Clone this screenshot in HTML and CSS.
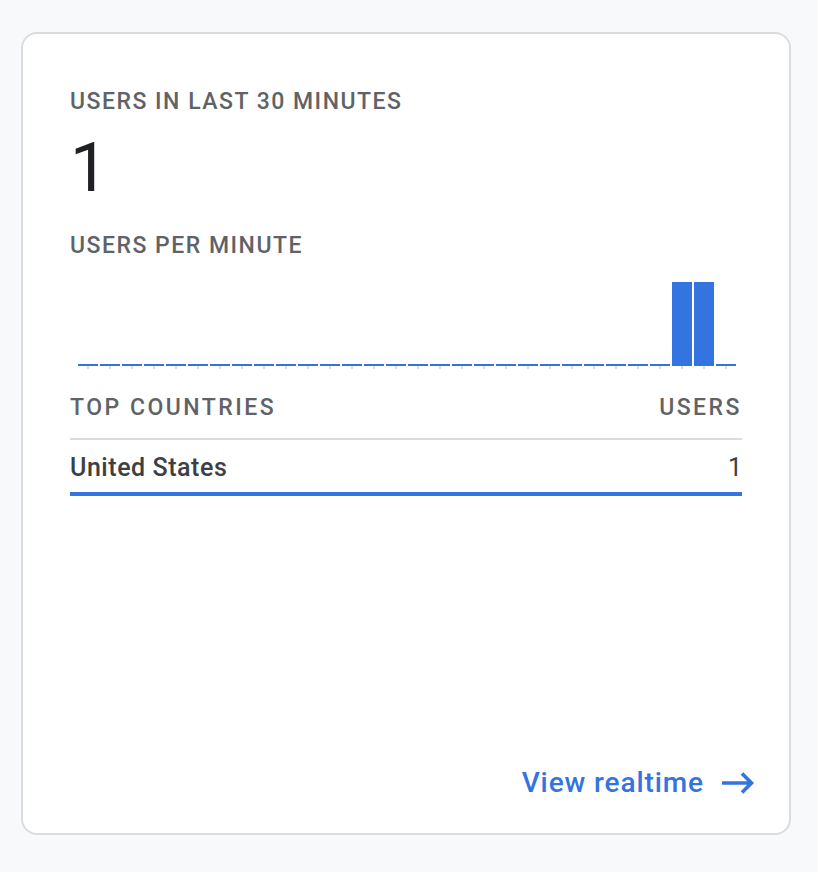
FILE: index.html
```html
<!DOCTYPE html>
<html lang="en">
<head>
    <meta charset="UTF-8">
    <title>Realtime</title>
    <link rel="stylesheet" href="styles.css">
</head>
<body>
    <div class="card">
        <div class="label">Users in last 30 minutes</div>
        <div class="big-number">1</div>
        <div class="label label-chart">Users per minute</div>

        <div class="chart" id="chart"></div>

        <div class="table-head">
            <span class="label label-wide">Top countries</span>
            <span class="label label-wide">Users</span>
        </div>
        <div class="table-row">
            <span class="country">United States</span>
            <span class="value">1</span>
        </div>

        <div class="footer">
            <a class="view-link" href="#">View realtime
                <svg class="arrow" width="34" height="24" viewBox="0 0 34 24">
                    <path d="M1 12H31M21 2.5L30.5 12L21 21.5" fill="none" stroke="#3474e0" stroke-width="3.6"/>
                </svg>
            </a>
        </div>
    </div>

    <script>
        var data = [0,0,0,0,0,0,0,0,0,0,0,0,0,0,0,0,0,0,0,0,0,0,0,0,0,0,0,1,1,0];
        var chart = document.getElementById("chart");

        for (var i = 0; i < data.length; i++) {
            var col = document.createElement("div");
            col.className = "col";

            var bar = document.createElement("div");
            bar.className = "bar";
            bar.style.height = (data[i] > 0 ? data[i] * 84 : 2) + "px";

            var tick = document.createElement("div");
            tick.className = "tick";

            col.appendChild(bar);
            col.appendChild(tick);
            chart.appendChild(col);
        }
    </script>
</body>
</html>
```

FILE: styles.css
```css
body {
    margin: 0;
    background-color: #f8f9fa;
    font-family: Roboto, "Liberation Sans", sans-serif;
}

.card {
    width: 770px;
    height: 803px;
    margin: 32px 0 0 21px;
    padding: 54px 47px 32px 47px;
    box-sizing: border-box;
    background-color: #ffffff;
    border: 2px solid #dadce0;
    border-radius: 16px;
    display: flex;
    flex-direction: column;
}

.label {
    font-size: 23px;
    line-height: 28px;
    font-weight: 500;
    color: #5f6368;
    text-transform: uppercase;
    letter-spacing: 1.5px;
}

.label-wide {
    letter-spacing: 2.5px;
}

.big-number {
    margin-top: 14px;
    font-size: 68px;
    line-height: 76px;
    color: #202124;
}

.label-chart {
    margin-top: 26px;
}

.chart {
    margin-top: 22px;
    height: 87px;
    padding-left: 8px;
    display: flex;
    align-items: flex-end;
    gap: 2px;
}

.col {
    width: 20px;
    display: flex;
    flex-direction: column;
    align-items: center;
}

.bar {
    width: 20px;
    background-color: #3474e0;
}

.tick {
    width: 2px;
    height: 3px;
    background-color: #dadce0;
}

.table-head {
    margin-top: 25px;
    padding-bottom: 16px;
    border-bottom: 2px solid #dadce0;
    display: flex;
    justify-content: space-between;
}

.table-row {
    padding-top: 13px;
    padding-bottom: 9px;
    border-bottom: 4px solid #3474e0;
    display: flex;
    justify-content: space-between;
    font-size: 25px;
    line-height: 30px;
    color: #3c4043;
}

.country {
    font-weight: 500;
    letter-spacing: 0.55px;
}

.value {
    font-weight: 400;
}

.footer {
    margin-top: auto;
    margin-right: -13px;
    display: flex;
    justify-content: flex-end;
}

.view-link {
    display: flex;
    align-items: center;
    gap: 17px;
    font-size: 28px;
    line-height: 36px;
    font-weight: 500;
    color: #3474e0;
    text-decoration: none;
    letter-spacing: 0.9px;
}

.arrow {
    display: block;
}
```
